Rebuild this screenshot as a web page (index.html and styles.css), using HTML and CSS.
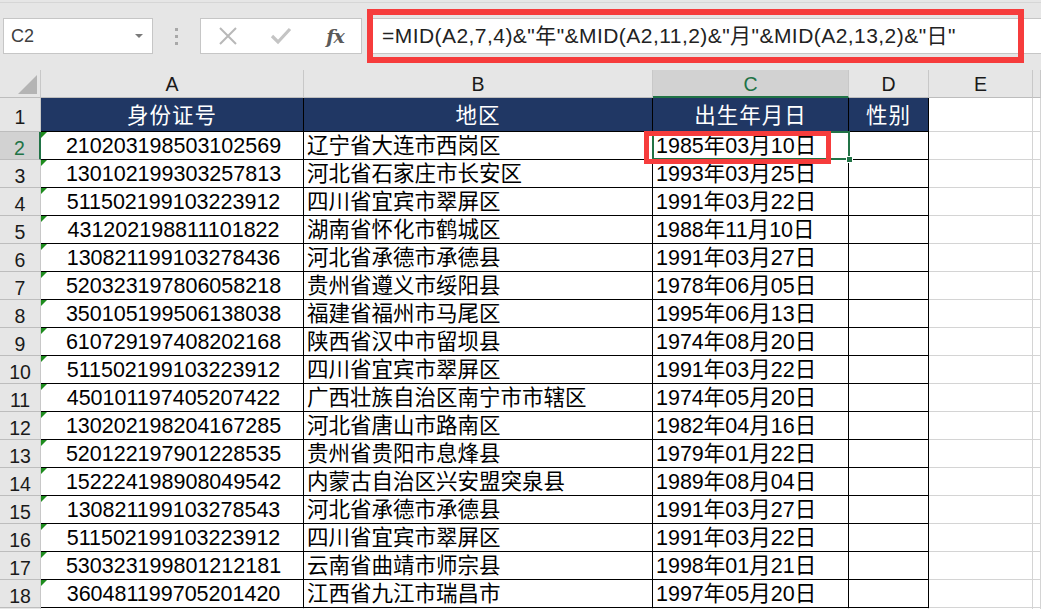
FILE: index.html
```html
<!DOCTYPE html>
<html lang="zh">
<head>
<meta charset="utf-8">
<title>Excel</title>
<link rel="stylesheet" href="styles.css">
</head>
<body>
<div class="toolbar">
  <div class="namebox"><span class="name">C2</span><span class="caret"></span></div>
  <div class="sep"><i></i><i></i><i></i></div>
  <div class="btnbox">
    <span class="btn x">
      <svg width="20" height="20" viewBox="0 0 20 20"><path d="M2 2 L18 18 M18 2 L2 18" stroke="#b8b8b8" stroke-width="2" fill="none"/></svg>
    </span>
    <span class="btn ok">
      <svg width="22" height="20" viewBox="0 0 22 20"><path d="M2 10 L8 16 L20 3" stroke="#c4c4c4" stroke-width="3.2" fill="none"/></svg>
    </span>
    <span class="btn fx">fx</span>
  </div>
  <div class="formula">=MID(A2,7,4)&amp;"年"&amp;MID(A2,11,2)&amp;"月"&amp;MID(A2,13,2)&amp;"日"</div>
  <div class="redbox top"></div>
</div>
<div class="grid">
  <div class="h corner"><span class="tri"></span></div>
  <div class="h col">A</div><div class="h col">B</div><div class="h col sel">C</div><div class="h col">D</div><div class="h col">E</div><div class="h col last"></div>

  <div class="h rh r1">1</div>
  <div class="c hd r1">身份证号</div><div class="c hd r1">地区</div><div class="c hd r1">出生年月日</div><div class="c hd r1">性别</div><div class="e r1"></div><div class="e r1"></div>

  <div class="h rh sel">2</div>
  <div class="c a">210203198503102569</div><div class="c b">辽宁省大连市西岗区</div><div class="c d active">1985年03月10日<span class="handle"></span><span class="redbox cell"></span></div><div class="c g"></div><div class="e"></div><div class="e"></div>

  <div class="h rh">3</div>
  <div class="c a">130102199303257813</div><div class="c b">河北省石家庄市长安区</div><div class="c d">1993年03月25日</div><div class="c g"></div><div class="e"></div><div class="e"></div>

  <div class="h rh">4</div>
  <div class="c a">511502199103223912</div><div class="c b">四川省宜宾市翠屏区</div><div class="c d">1991年03月22日</div><div class="c g"></div><div class="e"></div><div class="e"></div>

  <div class="h rh">5</div>
  <div class="c a">431202198811101822</div><div class="c b">湖南省怀化市鹤城区</div><div class="c d">1988年11月10日</div><div class="c g"></div><div class="e"></div><div class="e"></div>

  <div class="h rh">6</div>
  <div class="c a">130821199103278436</div><div class="c b">河北省承德市承德县</div><div class="c d">1991年03月27日</div><div class="c g"></div><div class="e"></div><div class="e"></div>

  <div class="h rh">7</div>
  <div class="c a">520323197806058218</div><div class="c b">贵州省遵义市绥阳县</div><div class="c d">1978年06月05日</div><div class="c g"></div><div class="e"></div><div class="e"></div>

  <div class="h rh">8</div>
  <div class="c a">350105199506138038</div><div class="c b">福建省福州市马尾区</div><div class="c d">1995年06月13日</div><div class="c g"></div><div class="e"></div><div class="e"></div>

  <div class="h rh">9</div>
  <div class="c a">610729197408202168</div><div class="c b">陕西省汉中市留坝县</div><div class="c d">1974年08月20日</div><div class="c g"></div><div class="e"></div><div class="e"></div>

  <div class="h rh">10</div>
  <div class="c a">511502199103223912</div><div class="c b">四川省宜宾市翠屏区</div><div class="c d">1991年03月22日</div><div class="c g"></div><div class="e"></div><div class="e"></div>

  <div class="h rh">11</div>
  <div class="c a">450101197405207422</div><div class="c b">广西壮族自治区南宁市市辖区</div><div class="c d">1974年05月20日</div><div class="c g"></div><div class="e"></div><div class="e"></div>

  <div class="h rh">12</div>
  <div class="c a">130202198204167285</div><div class="c b">河北省唐山市路南区</div><div class="c d">1982年04月16日</div><div class="c g"></div><div class="e"></div><div class="e"></div>

  <div class="h rh">13</div>
  <div class="c a">520122197901228535</div><div class="c b">贵州省贵阳市息烽县</div><div class="c d">1979年01月22日</div><div class="c g"></div><div class="e"></div><div class="e"></div>

  <div class="h rh">14</div>
  <div class="c a">152224198908049542</div><div class="c b">内蒙古自治区兴安盟突泉县</div><div class="c d">1989年08月04日</div><div class="c g"></div><div class="e"></div><div class="e"></div>

  <div class="h rh">15</div>
  <div class="c a">130821199103278543</div><div class="c b">河北省承德市承德县</div><div class="c d">1991年03月27日</div><div class="c g"></div><div class="e"></div><div class="e"></div>

  <div class="h rh">16</div>
  <div class="c a">511502199103223912</div><div class="c b">四川省宜宾市翠屏区</div><div class="c d">1991年03月22日</div><div class="c g"></div><div class="e"></div><div class="e"></div>

  <div class="h rh">17</div>
  <div class="c a">530323199801212181</div><div class="c b">云南省曲靖市师宗县</div><div class="c d">1998年01月21日</div><div class="c g"></div><div class="e"></div><div class="e"></div>

  <div class="h rh">18</div>
  <div class="c a">360481199705201420</div><div class="c b">江西省九江市瑞昌市</div><div class="c d">1997年05月20日</div><div class="c g"></div><div class="e"></div><div class="e"></div>

  <div class="h rh"></div>
  <div class="e"></div><div class="e"></div><div class="e"></div><div class="e"></div><div class="e"></div><div class="e"></div>
</div>
</body>
</html>
```
FILE: styles.css
```css
html, body {
  margin: 0;
  padding: 0;
  overflow: hidden;
  background: #ffffff;
}
body {
  width: 1041px;
  height: 609px;
  font-family: "Liberation Sans", "Noto Sans CJK SC", sans-serif;
}

/* ---------- formula bar ---------- */
.toolbar {
  position: relative;
  height: 70px;
  box-sizing: border-box;
  padding: 18px 0 0 3px;
  display: flex;
  align-items: flex-start;
  background: linear-gradient(#e6e6e6 0 2px, #d6d6d6 2px 3px, #e6e6e6 3px);
}
.namebox {
  width: 150px;
  height: 36px;
  box-sizing: border-box;
  background: #fff;
  border: 1px solid #c6c6c6;
  display: flex;
  align-items: center;
  justify-content: space-between;
  padding: 0 9px 0 7px;
}
.name {
  font-size: 18px;
  color: #404040;
}
.caret {
  width: 0;
  height: 0;
  border-left: 4px solid transparent;
  border-right: 4px solid transparent;
  border-top: 4px solid #7a7a7a;
}
.sep {
  width: 47px;
  height: 36px;
  display: flex;
  flex-direction: column;
  align-items: center;
  justify-content: center;
  gap: 4px;
}
.sep i {
  display: block;
  width: 3px;
  height: 3px;
  background: #a8a8a8;
}
.btnbox {
  width: 162px;
  height: 36px;
  box-sizing: border-box;
  background: #fff;
  border: 1px solid #c6c6c6;
  display: flex;
  align-items: center;
  justify-content: space-between;
  padding: 0 6px 0 8px;
}
.btn {
  display: flex;
  align-items: center;
  justify-content: center;
  width: 40px;
}
.btn.x {
  width: 38px;
}
.btn.fx {
  font-family: "DejaVu Serif", "Liberation Serif", serif;
  font-style: italic;
  font-weight: bold;
  font-size: 19px;
  color: #5a5a5a;
  letter-spacing: -1px;
}
.formula {
  flex: 1;
  margin-left: 5px;
  margin-right: -2px;
  height: 36px;
  box-sizing: border-box;
  background: #fff;
  border: 1px solid #c6c6c6;
  padding-left: 14px;
  font-size: 21px;
  letter-spacing: 0.45px;
  line-height: 34px;
  color: #222;
  white-space: nowrap;
}
.redbox {
  position: absolute;
  box-sizing: border-box;
  border: 6px solid #f63c3c;
  pointer-events: none;
}
.redbox.top {
  left: 367px;
  top: 9px;
  width: 657px;
  height: 54px;
}

/* ---------- grid ---------- */
.grid {
  display: grid;
  grid-template-columns: 41px 263px 349px 196px 80px 104px 1fr;
  grid-template-rows: 28px 34px;
  grid-auto-rows: 28px;
}
.grid > div {
  box-sizing: border-box;
  border-right: 1px solid #d4d4d4;
  border-bottom: 1px solid #d4d4d4;
  white-space: nowrap;
  overflow: visible;
}
.h {
  background: #e6e6e6;
  color: #1a1a1a;
  font-size: 19.5px;
  display: flex;
  align-items: center;
  justify-content: center;
}
.grid > .h {
  border-right-color: #c8c8c8;
  border-bottom-color: #bdbdbd;
}
.h.col {
  padding-top: 2px;
}
.h.rh {
  padding-top: 5px;
}
.h.sel {
  background: #d2d2d2;
  color: #217346;
}
.grid > .h.col.sel {
  border-bottom: 2px solid #217346;
}
.grid > .h.rh.sel {
  border-right: 2px solid #217346;
}
.corner {
  position: relative;
}
.tri {
  position: absolute;
  right: 3px;
  bottom: 3px;
  width: 0;
  height: 0;
  border-left: 19px solid transparent;
  border-bottom: 19px solid #b4b4b4;
}
.grid > .c {
  border-right-color: #000;
  border-bottom-color: #000;
  font-size: 21.5px;
  line-height: 29px;
  color: #000;
  position: relative;
}
.grid > .hd {
  background: #203764;
  color: #fff;
  text-align: center;
  line-height: 36px;
  letter-spacing: 1px;
}
.a {
  text-align: center;
  padding-left: 3px;
}
.a::before {
  content: "";
  position: absolute;
  left: 0;
  top: 0;
  width: 0;
  height: 0;
  border-top: 6px solid #1e8c1e;
  border-right: 6px solid transparent;
}
.b, .d {
  padding-left: 3px;
}
.active::after {
  content: "";
  position: absolute;
  left: -1px;
  top: -1px;
  right: -2px;
  bottom: -1px;
  border: 2px solid #217346;
  pointer-events: none;
}
.handle {
  position: absolute;
  right: -5px;
  bottom: -4px;
  width: 7px;
  height: 7px;
  background: #217346;
  border: 1px solid #fff;
  box-sizing: border-box;
  z-index: 2;
}
.redbox.cell {
  left: -9px;
  top: -1px;
  width: 187px;
  height: 33px;
  border-width: 5px;
  z-index: 3;
}
.e {
  background: #fff;
}
```
